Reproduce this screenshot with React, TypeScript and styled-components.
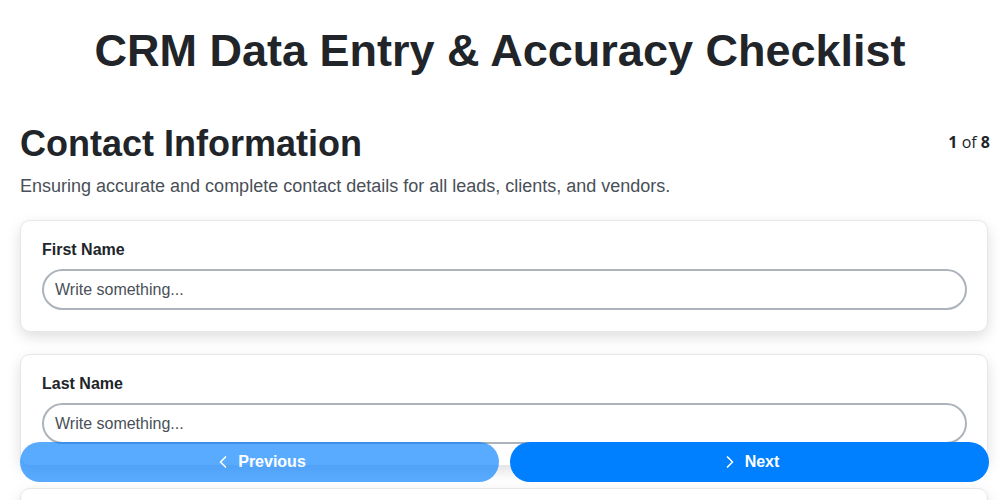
import React from "react";
import styled, { createGlobalStyle } from "styled-components";
import { ChevronLeft, ChevronRight } from "lucide-react";

const GlobalStyle = createGlobalStyle`
  body {
    margin: 0;
    background: #fff;
    font-family: "Liberation Sans", Arial, sans-serif;
    color: #212529;
  }
`;

const Title = styled.h1`
  margin: 0;
  padding-top: 25px;
  text-align: center;
  font-size: 45px;
  line-height: 52px;
  font-weight: 700;
  color: #212529;
`;

const Section = styled.section`
  padding: 0 10px 120px 20px;
`;

const SectionHeader = styled.div`
  display: flex;
  justify-content: space-between;
  align-items: flex-start;
  margin-top: 45px;
`;

const SectionTitle = styled.h2`
  margin: 0;
  font-size: 36px;
  line-height: 44px;
  font-weight: 700;
`;

const Counter = styled.div`
  font-family: "Open Sans", sans-serif;
  font-size: 16px;
  padding-top: 9px;
  color: #212529;

  b {
    font-weight: 700;
  }
`;

const Description = styled.p`
  margin: 9px 0 23px;
  font-size: 18px;
  line-height: 22px;
  color: #495057;
`;

const Card = styled.div`
  margin: 0 2px 22px 0;
  padding: 20px 20px 21px 21px;
  border: 1px solid #e6e7eb;
  border-radius: 10px;
  background: #fff;
  box-shadow: 0 5px 14px rgba(0, 0, 0, 0.13);
`;

const Label = styled.label`
  display: block;
  font-size: 16px;
  font-weight: 700;
  margin-bottom: 10px;
`;

const Input = styled.input`
  box-sizing: border-box;
  width: 100%;
  height: 41px;
  padding: 0 11px;
  border: 2px solid #adb3bb;
  border-radius: 21px;
  font-family: "Liberation Sans", Arial, sans-serif;
  font-size: 16px;
  color: #212529;
  outline: none;

  &::placeholder {
    color: #495057;
  }
`;

const NavBar = styled.div`
  position: fixed;
  left: 20px;
  right: 11px;
  bottom: 18px;
  display: grid;
  grid-template-columns: 1fr 1fr;
  gap: 11px;
`;

const NavButton = styled.button<{ faded?: boolean }>`
  display: flex;
  align-items: center;
  justify-content: center;
  gap: 5px;
  height: 40px;
  border: none;
  border-radius: 20px;
  background: #007fff;
  color: #fff;
  font-family: "Liberation Sans", Arial, sans-serif;
  font-size: 16px;
  font-weight: 700;
  opacity: ${({ faded }) => (faded ? 0.65 : 1)};
  cursor: pointer;
`;

const fields = ["First Name", "Last Name", "Email Address"];

const App: React.FC = () => {
  return (
    <>
      <GlobalStyle />
      <Title>CRM Data Entry &amp; Accuracy Checklist</Title>
      <Section>
        <SectionHeader>
          <SectionTitle>Contact Information</SectionTitle>
          <Counter>
            <b>1</b> of <b>8</b>
          </Counter>
        </SectionHeader>
        <Description>
          Ensuring accurate and complete contact details for all leads, clients,
          and vendors.
        </Description>
        {fields.map((f) => (
          <Card key={f}>
            <Label>{f}</Label>
            <Input type="text" placeholder="Write something..." />
          </Card>
        ))}
      </Section>
      <NavBar>
        <NavButton faded>
          <ChevronLeft size={20} strokeWidth={2} />
          Previous
        </NavButton>
        <NavButton>
          <ChevronRight size={20} strokeWidth={2} />
          Next
        </NavButton>
      </NavBar>
    </>
  );
};

export default App;
